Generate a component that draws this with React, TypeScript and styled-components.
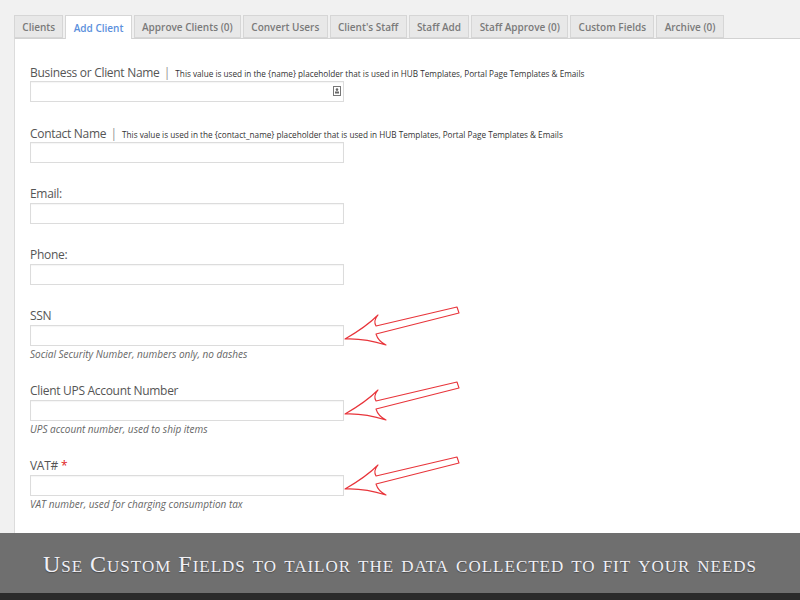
import React from "react";
import styled, { createGlobalStyle } from "styled-components";

const Global = createGlobalStyle`
  html, body { margin: 0; padding: 0; }
  body { background: #f1f1f1; font-family: "Open Sans", "Liberation Sans", sans-serif; }
`;

const Page = styled.div`
  width: 800px;
  height: 600px;
  display: flex;
  flex-direction: column;
  overflow: hidden;
`;

const TabBar = styled.div`
  display: flex;
  gap: 2px;
  padding: 15px 0 0 14px;
  height: 23px;
  position: relative;
  z-index: 1;
`;

const Tab = styled.div<{ $active?: boolean }>`
  box-sizing: border-box;
  height: ${(p) => (p.$active ? "24px" : "23px")};
  padding: 0 7.3px;
  display: flex;
  align-items: center;
  font-size: 10px;
  font-weight: 600;
  color: ${(p) => (p.$active ? "#5b8fdc" : "#7a7a7a")};
  background: ${(p) => (p.$active ? "#ffffff" : "#e8e8e8")};
  border: 1px solid #d6d6d6;
  border-bottom: ${(p) => (p.$active ? "none" : "1px solid #d6d6d6")};
  white-space: nowrap;
`;

const Panel = styled.div`
  flex: 1;
  margin-left: 14px;
  background: #fff;
  border-left: 1px solid #dcdcdc;
  border-top: 1px solid #d2d2d2;
  padding: 25px 0 0 15px;
  display: flex;
  flex-direction: column;
  gap: 23px;
`;

const Field = styled.div`
  display: flex;
  flex-direction: column;
`;

const Label = styled.div`
  height: 16px;
  line-height: 16px;
  font-size: 12px;
  letter-spacing: -0.3px;
  color: #555;
  margin-bottom: 1px;
  white-space: nowrap;
`;

const Sep = styled.span`
  color: #999;
  font-size: 13px;
  margin: 0 5px 0 4px;
`;

const Note = styled.span`
  font-size: 8.2px;
  letter-spacing: 0;
  color: #333;
`;

const Star = styled.span`
  color: #e02020;
  margin-left: 3px;
`;

const InputWrap = styled.div`
  position: relative;
  width: 314px;
  height: 21px;
`;

const Input = styled.div`
  box-sizing: border-box;
  width: 100%;
  height: 100%;
  border: 1px solid #dcdcdc;
  background: #fff;
  box-shadow: inset 0 1px 1px rgba(0, 0, 0, 0.04);
`;

const CardIcon = styled.svg`
  position: absolute;
  right: 3px;
  top: 5px;
`;

const ArrowSvg = styled.svg`
  position: absolute;
  left: 314px;
  top: -20px;
  overflow: visible;
`;

const Hint = styled.div`
  margin-top: 2px;
  height: 12px;
  line-height: 12px;
  font-size: 10px;
  font-style: italic;
  color: #666;
  white-space: nowrap;
`;

const Banner = styled.div`
  height: 60px;
  background: #6f6f6f;
  display: flex;
  align-items: center;
  justify-content: center;
`;

const BannerText = styled.div`
  font-family: "Liberation Serif", "DejaVu Serif", serif;
  font-variant: small-caps;
  font-size: 24px;
  color: #f0f0f6;
  letter-spacing: 1px;
  text-shadow: 0 1px 1px rgba(0, 0, 0, 0.35);
  padding-top: 3px;
  white-space: nowrap;
`;

const Footer = styled.div`
  height: 7px;
  background: #2b2b2b;
`;

const Arrow = () => (
  <ArrowSvg width="118" height="44" viewBox="0 0 118 44">
    <path
      d="M1,34 Q22,22 34,10 Q29,16 32,21 L113,2 L115,8 L32,29 Q34,36 42,40 Q20,33 1,34 Z"
      fill="#fff"
      stroke="#e8343a"
      strokeWidth="1.1"
      strokeLinejoin="round"
    />
  </ArrowSvg>
);

const tabs = [
  "Clients",
  "Add Client",
  "Approve Clients (0)",
  "Convert Users",
  "Client's Staff",
  "Staff Add",
  "Staff Approve (0)",
  "Custom Fields",
  "Archive (0)",
];

type F = {
  label: string;
  note?: string;
  hint?: string;
  arrow?: boolean;
  required?: boolean;
  icon?: boolean;
};

const fields: F[] = [
  {
    label: "Business or Client Name",
    note: "This value is used in the {name} placeholder that is used in HUB Templates, Portal Page Templates & Emails",
    icon: true,
  },
  {
    label: "Contact Name",
    note: "This value is used in the {contact_name} placeholder that is used in HUB Templates, Portal Page Templates & Emails",
  },
  { label: "Email:" },
  { label: "Phone:" },
  { label: "SSN", hint: "Social Security Number, numbers only, no dashes", arrow: true },
  { label: "Client UPS Account Number", hint: "UPS account number, used to ship items", arrow: true },
  { label: "VAT#", hint: "VAT number, used for charging consumption tax", arrow: true, required: true },
];

export default function App() {
  return (
    <>
      <Global />
      <Page>
        <TabBar>
          {tabs.map((t) => (
            <Tab key={t} $active={t === "Add Client"}>
              {t}
            </Tab>
          ))}
        </TabBar>
        <Panel>
          {fields.map((f) => (
            <Field key={f.label}>
              <Label>
                {f.label}
                {f.required && <Star>*</Star>}
                {f.note && (
                  <>
                    <Sep>|</Sep>
                    <Note>{f.note}</Note>
                  </>
                )}
              </Label>
              <InputWrap>
                <Input />
                {f.icon && (
                  <CardIcon width="8" height="10" viewBox="0 0 8 10">
                    <rect x="0.5" y="0.5" width="7" height="9" fill="#fff" stroke="#777" />
                    <circle cx="4" cy="3.6" r="1.3" fill="#666" />
                    <rect x="2" y="5.5" width="4" height="2" fill="#666" />
                  </CardIcon>
                )}
                {f.arrow && <Arrow />}
              </InputWrap>
              {f.hint && <Hint>{f.hint}</Hint>}
            </Field>
          ))}
        </Panel>
        <Banner>
          <BannerText>Use Custom Fields to tailor the data collected to fit your needs</BannerText>
        </Banner>
        <Footer />
      </Page>
    </>
  );
}
